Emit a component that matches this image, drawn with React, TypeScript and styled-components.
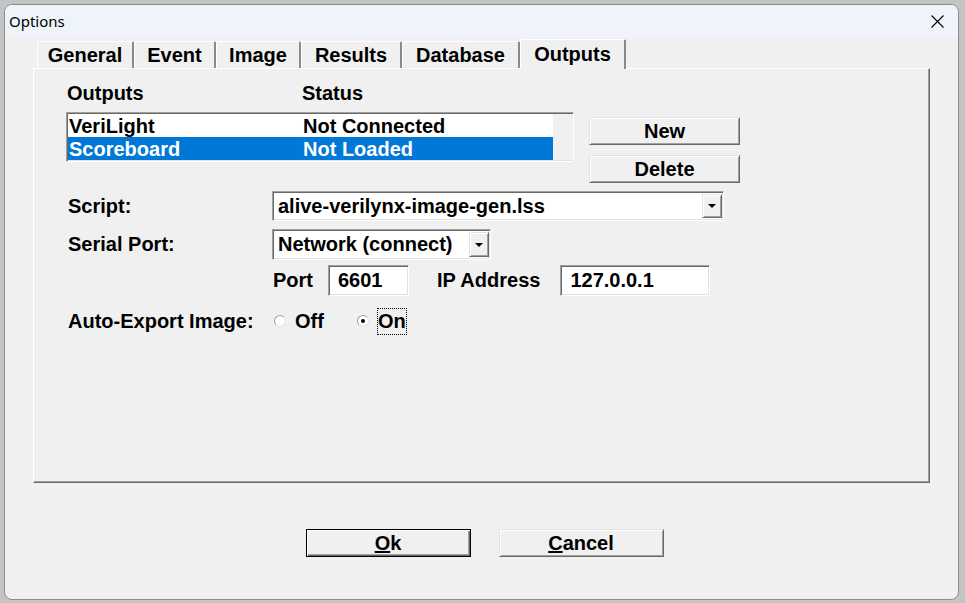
import styled, { createGlobalStyle } from 'styled-components';

const GlobalStyle = createGlobalStyle`
  html, body {
    margin: 0;
    padding: 0;
    background: #c4c4c4;
  }
  * {
    box-sizing: border-box;
  }
`;

const raised = `
  border: 1px solid;
  border-color: #e3e3e3 #696969 #696969 #e3e3e3;
  box-shadow: inset 1px 1px #ffffff, inset -1px -1px #a0a0a0;
`;

const sunken = `
  border: 1px solid;
  border-color: #a0a0a0 #ffffff #ffffff #a0a0a0;
  box-shadow: inset 1px 1px #696969, inset -1px -1px #e3e3e3;
`;

const Screen = styled.div`
  width: 965px;
  height: 603px;
  padding: 4px 6px 3px 4px;
  font-family: 'Liberation Sans', Arial, sans-serif;
  font-weight: 700;
  font-size: 20px;
  color: #000;
`;

const Window = styled.div`
  width: 955px;
  height: 596px;
  border: 1px solid #8c8c8c;
  border-radius: 8px;
  background: #f0f0f0;
  overflow: hidden;
  display: flex;
  flex-direction: column;
`;

const TitleBar = styled.div`
  height: 32px;
  flex: none;
  background: #eef4f9;
  display: flex;
  align-items: center;
  justify-content: space-between;
  padding: 0 14px 0 4px;
  font-family: 'Noto Sans', 'Open Sans', sans-serif;
  font-weight: 400;
  font-size: 15px;
`;

const CloseIcon = styled.svg`
  width: 13px;
  height: 13px;
`;

const Body = styled.div`
  flex: 1;
  padding: 2px 0 0 28px;
  display: flex;
  flex-direction: column;
`;

const TabStrip = styled.div`
  display: flex;
  align-items: flex-end;
  height: 29px;
  padding-left: 4px;
  position: relative;
  z-index: 1;
`;

const Tab = styled.div<{ $active?: boolean; $w: number }>`
  width: ${(p) => p.$w}px;
  height: ${(p) => (p.$active ? 30 : 27)}px;
  margin-bottom: ${(p) => (p.$active ? -1 : 0)}px;
  display: flex;
  align-items: center;
  justify-content: center;
  background: #f0f0f0;
  border-top: 1px solid #ffffff;
  border-left: 1px solid #ffffff;
  border-right: 2px solid #8a8a8a;
  border-radius: 2px 2px 0 0;
  padding-bottom: ${(p) => (p.$active ? 1 : 0)}px;
`;

const Panel = styled.div`
  width: 897px;
  height: 415px;
  border-top: 1px solid #ffffff;
  border-left: 1px solid #ffffff;
  border-right: 1px solid #696969;
  border-bottom: 1px solid #696969;
  box-shadow: inset -1px -1px #a0a0a0;
  padding: 14px 0 0 32px;
`;

const OutputsBlock = styled.div`
  display: flex;
`;

const ListColumn = styled.div`
  width: 508px;
  display: flex;
  flex-direction: column;
`;

const HeaderRow = styled.div`
  height: 20px;
  display: flex;
  align-items: center;
  padding-left: 1px;
  margin-bottom: 9px;
`;

const Cell = styled.div<{ $w?: number }>`
  width: ${(p) => (p.$w ? `${p.$w}px` : 'auto')};
  white-space: nowrap;
`;

const ListBox = styled.div`
  height: 50px;
  ${sunken}
  padding: 1px 0 1px 1px;
  display: flex;
`;

const ListRows = styled.div`
  flex: 1;
  background: #ffffff;
  display: flex;
  flex-direction: column;
`;

const ListGutter = styled.div`
  width: 20px;
  background: #f0f0f0;
`;

const ListRow = styled.div<{ $selected?: boolean }>`
  height: 23px;
  display: flex;
  align-items: center;
  padding: 1px 0 0 1px;
  background: ${(p) => (p.$selected ? '#0078d7' : '#ffffff')};
  color: ${(p) => (p.$selected ? '#ffffff' : '#000000')};
`;

const ButtonColumn = styled.div`
  display: flex;
  flex-direction: column;
  gap: 10px;
  padding-top: 34px;
  margin-left: 15px;
`;

const Button = styled.div<{ $w: number; $default?: boolean }>`
  width: ${(p) => p.$w}px;
  height: 28px;
  display: flex;
  align-items: center;
  justify-content: center;
  background: #f0f0f0;
  ${raised}
  ${(p) =>
    p.$default
      ? `border-color: #000 #000 #000 #000;
         box-shadow: inset 1px 1px #ffffff, inset -1px -1px #696969, inset -2px -2px #a0a0a0;`
      : ''}
`;

const Form = styled.div`
  margin-top: 8px;
  display: grid;
  grid-template-columns: 206px auto;
  align-items: center;
`;

const Label = styled.div<{ $top?: number }>`
  padding-left: 2px;
  margin-top: ${(p) => p.$top ?? 0}px;
  white-space: nowrap;
`;

const FieldRow = styled.div<{ $top?: number }>`
  display: flex;
  align-items: center;
  margin-top: ${(p) => p.$top ?? 0}px;
`;

const Combo = styled.div<{ $w: number; $h: number }>`
  width: ${(p) => p.$w}px;
  height: ${(p) => p.$h}px;
  ${sunken}
  background: #ffffff;
  display: flex;
  align-items: center;
  padding: 2px 1px 2px 5px;
`;

const ComboText = styled.div`
  flex: 1;
  white-space: nowrap;
`;

const ArrowButton = styled.div`
  width: 20px;
  align-self: stretch;
  background: #f0f0f0;
  ${raised}
  display: flex;
  align-items: center;
  justify-content: center;
`;

const Arrow = styled.div`
  width: 0;
  height: 0;
  border-left: 4px solid transparent;
  border-right: 4px solid transparent;
  border-top: 4px solid #000;
`;

const Field = styled.div<{ $w: number }>`
  width: ${(p) => p.$w}px;
  height: 31px;
  ${sunken}
  background: #ffffff;
  display: flex;
  align-items: center;
  padding-left: 9px;
`;

const InlineLabel = styled.div<{ $left: number; $right: number }>`
  margin-left: ${(p) => p.$left}px;
  margin-right: ${(p) => p.$right}px;
  white-space: nowrap;
`;

const RadioGroup = styled.div`
  display: flex;
  align-items: center;
  height: 24px;
  margin-top: 13px;
`;

const RadioItem = styled.div<{ $gap: number }>`
  display: flex;
  align-items: center;
  margin-right: ${(p) => p.$gap}px;
`;

const RadioDot = styled.div<{ $checked?: boolean }>`
  width: 12px;
  height: 12px;
  margin: 0 8px 0 2px;
  border-radius: 50%;
  background: #ffffff;
  border: 1px solid;
  border-color: #a0a0a0 #e3e3e3 #e3e3e3 #a0a0a0;
  display: flex;
  align-items: center;
  justify-content: center;
  &::after {
    content: '';
    width: 4px;
    height: 4px;
    border-radius: 50%;
    background: ${(p) => (p.$checked ? '#000' : 'transparent')};
  }
`;

const RadioText = styled.div<{ $focused?: boolean }>`
  padding: 1px 0;
  border: 1px dotted ${(p) => (p.$focused ? '#000' : 'transparent')};
`;

const Footer = styled.div`
  display: flex;
  justify-content: center;
  gap: 28px;
  margin-top: 46px;
  padding-left: 6px;
  width: 897px;
`;

const tabs = [
  { name: 'General', w: 97 },
  { name: 'Event', w: 82 },
  { name: 'Image', w: 85 },
  { name: 'Results', w: 101 },
  { name: 'Database', w: 118 },
  { name: 'Outputs', w: 106, active: true },
];

const outputs = [
  { name: 'VeriLight', status: 'Not Connected' },
  { name: 'Scoreboard', status: 'Not Loaded', selected: true },
];

export default function App() {
  return (
    <>
      <GlobalStyle />
      <Screen>
        <Window>
          <TitleBar>
            <span>Options</span>
            <CloseIcon viewBox="0 0 13 13">
              <path d="M0.5 0.5 L12.5 12.5 M12.5 0.5 L0.5 12.5" stroke="#000" strokeWidth="1.1" fill="none" />
            </CloseIcon>
          </TitleBar>
          <Body>
            <TabStrip>
              {tabs.map((t) => (
                <Tab key={t.name} $w={t.w} $active={t.active}>
                  {t.name}
                </Tab>
              ))}
            </TabStrip>
            <Panel>
              <OutputsBlock>
                <ListColumn>
                  <HeaderRow>
                    <Cell $w={235}>Outputs</Cell>
                    <Cell>Status</Cell>
                  </HeaderRow>
                  <ListBox>
                    <ListRows>
                      {outputs.map((o) => (
                        <ListRow key={o.name} $selected={o.selected}>
                          <Cell $w={234}>{o.name}</Cell>
                          <Cell>{o.status}</Cell>
                        </ListRow>
                      ))}
                    </ListRows>
                    <ListGutter />
                  </ListBox>
                </ListColumn>
                <ButtonColumn>
                  <Button $w={151}>New</Button>
                  <Button $w={151}>Delete</Button>
                </ButtonColumn>
              </OutputsBlock>

              <Form>
                <Label>Script:</Label>
                <FieldRow>
                  <Combo $w={452} $h={30}>
                    <ComboText>alive-verilynx-image-gen.lss</ComboText>
                    <ArrowButton>
                      <Arrow />
                    </ArrowButton>
                  </Combo>
                </FieldRow>

                <Label $top={8}>Serial Port:</Label>
                <FieldRow $top={8}>
                  <Combo $w={219} $h={31}>
                    <ComboText>Network (connect)</ComboText>
                    <ArrowButton>
                      <Arrow />
                    </ArrowButton>
                  </Combo>
                </FieldRow>

                <div />
                <FieldRow $top={5}>
                  <InlineLabel $left={1} $right={15}>Port</InlineLabel>
                  <Field $w={81}>6601</Field>
                  <InlineLabel $left={28} $right={20}>IP Address</InlineLabel>
                  <Field $w={150}>127.0.0.1</Field>
                </FieldRow>

                <Label $top={13}>Auto-Export Image:</Label>
                <RadioGroup>
                  <RadioItem $gap={30}>
                    <RadioDot />
                    <RadioText>Off</RadioText>
                  </RadioItem>
                  <RadioItem $gap={0}>
                    <RadioDot $checked />
                    <RadioText $focused>On</RadioText>
                  </RadioItem>
                </RadioGroup>
              </Form>
            </Panel>
            <Footer>
              <Button $w={165} $default>
                <span>
                  <u>O</u>k
                </span>
              </Button>
              <Button $w={165}>
                <span>
                  <u>C</u>ancel
                </span>
              </Button>
            </Footer>
          </Body>
        </Window>
      </Screen>
    </>
  );
}
